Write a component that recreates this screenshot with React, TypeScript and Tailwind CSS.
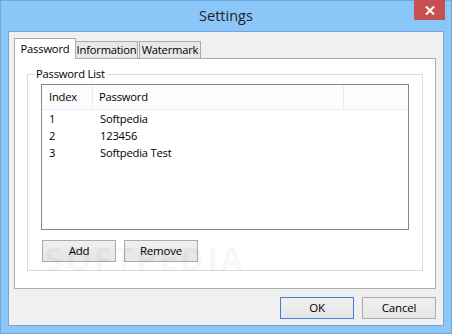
import React from 'react';

const rows = [
  { index: '1', password: 'Softpedia' },
  { index: '2', password: '123456' },
  { index: '3', password: 'Softpedia Test' },
];

const font = { fontFamily: '"Open Sans", "Liberation Sans", sans-serif' };

function Button({ label, focused }: { label: string; focused?: boolean }) {
  return (
    <button
      className={
        'h-[22px] w-[74px] text-[11.5px] tracking-[-0.2px] text-black bg-gradient-to-b from-[#f0f0f0] to-[#e5e5e5] border ' +
        (focused ? 'border-[#3c7fd5]' : 'border-[#acacac]')
      }
    >
      {label}
    </button>
  );
}

export default function App() {
  return (
    <div
      className="w-[452px] h-[334px] bg-[#8bc6f9] border border-[#6fa9dc] flex flex-col px-[7px] pb-[7px] text-[11.2px] tracking-[-0.2px] text-black"
      style={font}
    >
      {/* title bar */}
      <div className="h-[30px] flex items-center justify-center relative shrink-0">
        <span className="text-[14.5px] tracking-normal text-[#222]">Settings</span>
        <div className="absolute -right-[1px] -top-[1px] w-[31px] h-[20px] bg-[#c75050] flex items-center justify-center">
          <svg width="10" height="9" viewBox="0 0 10 9">
            <path d="M1 0.5 L9 8.5 M9 0.5 L1 8.5" stroke="white" strokeWidth="2" />
          </svg>
        </div>
      </div>

      {/* client */}
      <div className="flex-1 bg-[#f0f0f0] border border-[#71a6d8] flex flex-col pl-[5px] pr-[7px] pt-[6px]">
        {/* tabs */}
        <div className="flex items-end h-[21px] relative z-10">
          <div className="h-[21px] w-[62px] bg-white border border-[#acacac] border-b-0 flex items-start justify-center pt-[2px]">
            Password
          </div>
          <div className="h-[18px] w-[62px] bg-[#e8e8e8] border border-[#acacac] border-l-0 flex items-center justify-center">
            Information
          </div>
          <div className="h-[18px] w-[62px] bg-[#e8e8e8] border border-[#acacac] ml-[1px] flex items-center justify-center">
            Watermark
          </div>
        </div>

        {/* tab panel */}
        <div className="h-[231px] bg-white border border-[#acacac] -mt-[1px] px-[12px] pt-[15px]">
          <div className="h-[197px] border border-[#dcdcdc] relative px-[13px] pt-[9px]">
            <span className="absolute left-[6px] -top-[9px] bg-white px-[2px]">Password List</span>

            {/* list */}
            <div className="h-[146px] border border-[#828790] bg-white">
              <div className="flex h-[25px] bg-[#fcfcfc] border-b border-[#e5eef8]">
                <div className="w-[51px] border-r border-[#e5eef8] pl-[7px] flex items-center">Index</div>
                <div className="w-[251px] border-r border-[#e5eef8] pl-[6px] flex items-center">Password</div>
                <div className="flex-1"></div>
              </div>
              <div className="pt-[1px]">
                {rows.map((r) => (
                  <div key={r.index} className="flex h-[17px] items-center">
                    <div className="w-[51px] pl-[7px]">{r.index}</div>
                    <div className="pl-[7px]">{r.password}</div>
                  </div>
                ))}
              </div>
            </div>

            <div className="flex gap-[8px] mt-[10px] pl-[1px] relative">
              <Button label="Add" />
              <Button label="Remove" />
              <span className="absolute left-[4px] -top-[5px] text-[32px] font-bold tracking-[3px] text-[#000]/[0.05] pointer-events-none select-none">
                SOFTPEDIA
              </span>
            </div>
          </div>
        </div>

        {/* bottom buttons */}
        <div className="flex justify-end gap-[8px] mt-[8px]">
          <Button label="OK" focused />
          <Button label="Cancel" />
        </div>
      </div>
    </div>
  );
}
